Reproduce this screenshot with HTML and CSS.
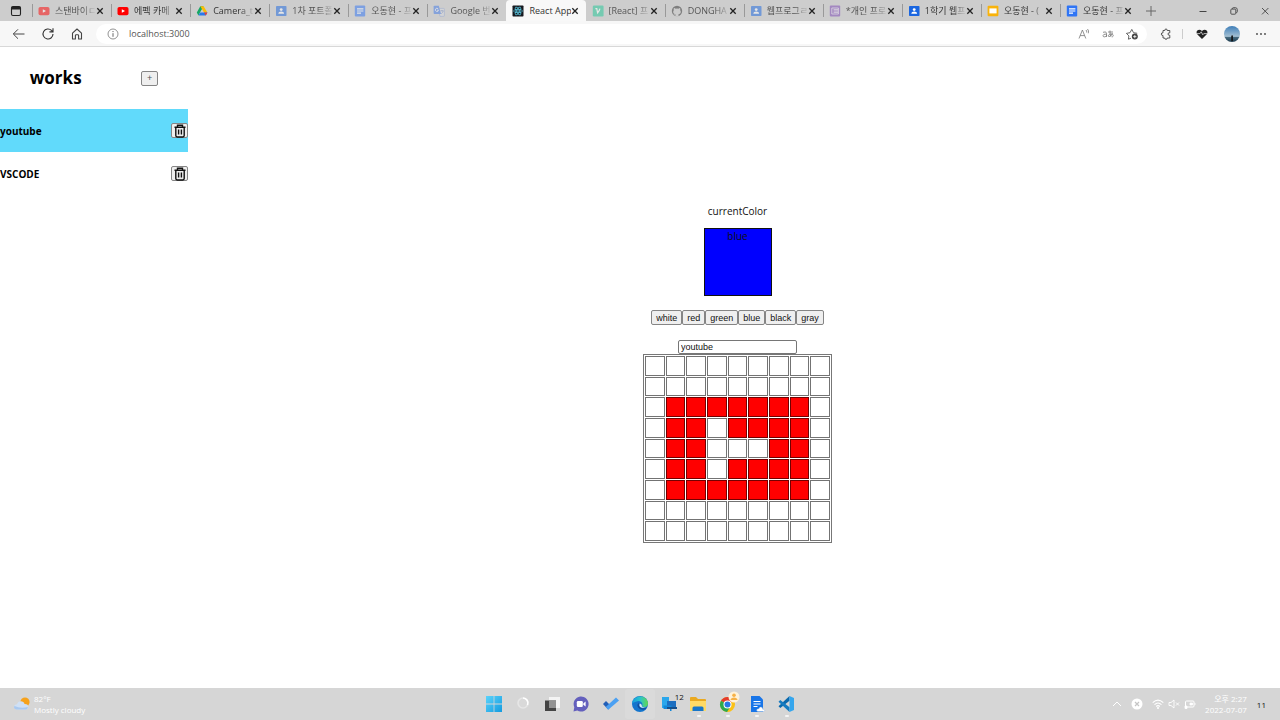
FILE: index.html
```
<!DOCTYPE html>
<html lang="ko">
<head>
<meta charset="utf-8">
<title>React App</title>
<link rel="stylesheet" href="styles.css">
</head>
<body>
<svg class="defs" aria-hidden="true">
  <symbol id="close" viewBox="0 0 8 8"><path d="M1.3 1.3l5.4 5.4M6.7 1.3L1.3 6.7" stroke="#222" stroke-width="1.3"/></symbol>
  <symbol id="yt" viewBox="0 0 12 12"><rect x=".5" y="2" width="11" height="8.2" rx="1.8" fill="#f00"/><path d="M4.8 4.2v3.6l3.2-1.8z" fill="#fff"/></symbol>
  <symbol id="class" viewBox="0 0 12 12"><rect x="1" y="1" width="10.5" height="10" rx=".8" fill="#1a66e0"/><circle cx="6.2" cy="4.6" r="1.4" fill="#fff"/><path d="M3.3 8.8c0-3 5.8-3 5.8 0z" fill="#fff"/></symbol>
  <symbol id="docs" viewBox="0 0 12 12"><rect x=".8" y=".6" width="10.4" height="10.8" rx="1" fill="#2f75f5"/><path d="M3 3.8h6.4M3 6h6.4M3 8.2h4" stroke="#fff" stroke-width="1.2"/></symbol>
  <symbol id="trash" viewBox="0 0 14 14"><path d="M1.5 3.2h11M4.5 3V1.2h5V3M2.8 3.4v8.2q0 1.4 1.4 1.4h5.6q1.4 0 1.4-1.4V3.4M5.6 5.6v5M8.4 5.6v5" fill="none" stroke="#111" stroke-width="1.4"/></symbol>
</svg>

<header class="browser">
  <div class="tabstrip">
    <button class="tab-menu" aria-label="Tab actions"><svg class="icon12" viewBox="0 0 12 12"><rect x="1.5" y="1.5" width="9" height="9" rx="1.4" fill="none" stroke="#222" stroke-width="1.1"/><path d="M1.5 3.2h9" stroke="#222" stroke-width="2.6"/></svg></button>
    <div class="tabs">
      <div class="tab dim"><svg class="icon12"><use href="#yt"/></svg><span class="tab-title">스탠바이ㄷ</span><button class="tab-close" aria-label="Close"><svg><use href="#close"/></svg></button></div>
      <div class="tab"><svg class="icon12"><use href="#yt"/></svg><span class="tab-title">에펙 카메</span><button class="tab-close" aria-label="Close"><svg><use href="#close"/></svg></button></div>
      <div class="tab"><svg class="icon12" viewBox="0 0 12 12"><path d="M4.3 1.2h3.3L4 7.5 2.4 10.6.8 7.5z" fill="#16a765"/><path d="M4.3 1.2h3.3l3.8 6.4H8z" fill="#fbbc05"/><path d="M.8 7.6l1.7 3h7.3l1.6-3H4.2l-1.7 3z" fill="#2879ee"/><path d="M8 7.6h3.4l-1.6 3z" fill="#ea4335"/></svg><span class="tab-title">Camera_t</span><button class="tab-close" aria-label="Close"><svg><use href="#close"/></svg></button></div>
      <div class="tab dim"><svg class="icon12"><use href="#class"/></svg><span class="tab-title">1차 포트폴</span><button class="tab-close" aria-label="Close"><svg><use href="#close"/></svg></button></div>
      <div class="tab dim"><svg class="icon12"><use href="#docs"/></svg><span class="tab-title">오동현 - 프</span><button class="tab-close" aria-label="Close"><svg><use href="#close"/></svg></button></div>
      <div class="tab dim"><svg class="icon12" viewBox="0 0 12 12"><path d="M5 3.4h5.6q.8 0 .8.8v6.4q0 .8-.8.8H7z" fill="#d8dbe2" stroke="#7893cc" stroke-width=".6"/><path d="M1.4.8h4.4L8 9H1.4Q.6 9 .6 8.200V1.600Q.6.8 1.400.8z" fill="#3f78e8"/><path d="M5.200 3.900a1.600 1.600 0 1 0 .3 1.300H4" fill="none" stroke="#fff" stroke-width=".8"/><path d="M7.400 5.800h3.200M9 5v.8M10.200 6q-.5 1.800-2 2.800" fill="none" stroke="#5574b4" stroke-width=".6"/></svg><span class="tab-title">Google 번</span><button class="tab-close" aria-label="Close"><svg><use href="#close"/></svg></button></div>
      <div class="tab active"><svg class="icon12" viewBox="0 0 12 12"><rect x=".5" y=".5" width="11" height="11" rx=".8" fill="#171a20"/><g fill="none" stroke="#5ccbe5" stroke-width=".7"><ellipse cx="6" cy="6" rx="4.500" ry="1.700"/><ellipse cx="6" cy="6" rx="4.500" ry="1.700" transform="rotate(60 6 6)"/><ellipse cx="6" cy="6" rx="4.500" ry="1.700" transform="rotate(120 6 6)"/></g><circle cx="6" cy="6" r=".8" fill="#5ccbe5"/></svg><span class="tab-title">React App</span><button class="tab-close" aria-label="Close"><svg><use href="#close"/></svg></button></div>
      <div class="tab dim"><svg class="icon12" viewBox="0 0 12 12"><rect x=".8" y=".6" width="10.800" height="10.800" rx="1.200" fill="#20c997"/><path d="M3.400 3.600h1.400l.8 4.200q2-2.300 2.300-4.200" fill="none" stroke="#fff" stroke-width="1.200"/></svg><span class="tab-title">[React] 프</span><button class="tab-close" aria-label="Close"><svg><use href="#close"/></svg></button></div>
      <div class="tab dim"><svg class="icon12" viewBox="0 0 12 12"><circle cx="6" cy="6" r="5.200" fill="#333"/><path d="M4.500 11.500V9.200C1.500 8.500 2 6 2.900 5.200 2.600 4.500 2.600 3.500 3 3q1 .1 1.700.7 1.300-.3 2.700 0Q8.100 3.100 9 3c.4.6.4 1.500.1 2.200C10 6 10.500 8.500 7.500 9.200v2.300z" fill="#ccc"/><path d="M4.600 10q-1.300.2-1.900-1" fill="none" stroke="#ccc" stroke-width=".7"/></svg><span class="tab-title">DONGHA</span><button class="tab-close" aria-label="Close"><svg><use href="#close"/></svg></button></div>
      <div class="tab dim"><svg class="icon12"><use href="#class"/></svg><span class="tab-title">웹프로그ㄹ</span><button class="tab-close" aria-label="Close"><svg><use href="#close"/></svg></button></div>
      <div class="tab dim"><svg class="icon12" viewBox="0 0 12 12"><rect x=".8" y=".6" width="10.400" height="10.800" rx=".8" fill="#7b45b5"/><path d="M2.800 3h6.600v6H2.800zM4.600 4.600h4.400M4.600 6h4.400M4.600 7.400h4.400" fill="none" stroke="#fff" stroke-width=".7"/></svg><span class="tab-title">*개인 프로</span><button class="tab-close" aria-label="Close"><svg><use href="#close"/></svg></button></div>
      <div class="tab"><svg class="icon12"><use href="#class"/></svg><span class="tab-title">1학기 웹프</span><button class="tab-close" aria-label="Close"><svg><use href="#close"/></svg></button></div>
      <div class="tab"><svg class="icon12" viewBox="0 0 12 12"><rect x=".6" y=".8" width="10.800" height="10.400" rx="1" fill="#f9b30b"/><path d="M2.400 3.400h7.200v5H2.400z" fill="#fff"/></svg><span class="tab-title">오동현 - (</span><button class="tab-close" aria-label="Close"><svg><use href="#close"/></svg></button></div>
      <div class="tab"><svg class="icon12"><use href="#docs"/></svg><span class="tab-title">오동현 - 프</span><button class="tab-close" aria-label="Close"><svg><use href="#close"/></svg></button></div>
    </div>
    <button class="new-tab" aria-label="New tab"><svg class="icon12" viewBox="0 0 12 12"><path d="M6 1v10M1 6h10" stroke="#666"/></svg></button>
    <div class="window-buttons">
      <button aria-label="Minimize"><svg class="icon10" viewBox="0 0 10 10"><path d="M1.500 5.500h7" stroke="#444"/></svg></button>
      <button aria-label="Restore"><svg class="icon10" viewBox="0 0 10 10"><path d="M3.400 3V2.600q0-.9.9-.9h2q2 0 2 2v2q0 .9-1 .9M1.800 4q0-.9.9-.9h3.200q.9 0 .9.900v3.300q0 .9-.9.9H2.700q-.9 0-.9-.9z" fill="none" stroke="#444" stroke-width=".9"/></svg></button>
      <button aria-label="Close window"><svg class="icon10" viewBox="0 0 10 10"><path d="M2 2l6.400 6.400M8.400 2L2 8.400" stroke="#444" stroke-width=".9"/></svg></button>
    </div>
  </div>

  <div class="toolbar">
    <div class="nav-buttons">
      <button aria-label="Back"><svg class="icon14" viewBox="0 0 14 14"><path d="M12.500 7h-11M6 2.300L1.300 7 6 11.700" fill="none" stroke="#444"/></svg></button>
      <button aria-label="Refresh"><svg class="icon14" viewBox="0 0 14 14"><path d="M12 7a5 5 0 1 1-1.500-3.600L12 4.800M12 1.300v3.600H8.400" fill="none" stroke="#333" stroke-width="1.100"/></svg></button>
      <button aria-label="Home"><svg class="icon14" viewBox="0 0 14 14"><path d="M2.500 6.200L7 2l4.500 4.200V12H8.600V8.600q0-.8-.8-.8H6.200q-.8 0-.8.8V12H2.500z" fill="none" stroke="#444" stroke-width="1.100" stroke-linejoin="round"/></svg></button>
    </div>
    <div class="address">
      <svg class="icon12" viewBox="0 0 12 12"><circle cx="6" cy="6" r="5" fill="none" stroke="#777" stroke-width=".8"/><path d="M6 5.200v3.600M6 3v1.100" stroke="#666"/></svg>
      <input class="url" type="text" value="localhost:3000" aria-label="Address">
      <button aria-label="Read aloud"><svg class="icon12" viewBox="0 0 12 12"><path d="M1 10.500L4.400 2l3.400 8.500M2.200 7.600h4.400M8 2q1 1 .6 2.500M9.500 1q1.700 1.700.8 4.300" fill="none" stroke="#777" stroke-width=".8"/></svg></button>
      <button aria-label="Translate"><svg class="icon12" viewBox="0 0 12 12"><path d="M1 4.300q3.500-1.300 3.500 1V9M4.500 6Q1 6 1 7.700c0 2 3.500 1.200 3.500-.5M6 4h5M8 2.500q-.4 4 1 6M10.500 5Q9 9 7 8.600C5 8 7.200 5.700 9.500 6c2.300.3 2.300 2.700.3 3" fill="none" stroke="#777" stroke-width=".8"/></svg></button>
      <button aria-label="Add to favorites"><svg class="icon12" viewBox="0 0 12 12"><path d="M5 10.200l-2.600 1 .5-3.300L.4 5.400 4 4.700 5.800 1.400l1.700 3.300 3.700.6" fill="none" stroke="#555" stroke-width=".9"/><circle cx="8.800" cy="8.600" r="3" fill="#444"/><path d="M8.800 7v3.200M7.200 8.600h3.200" stroke="#fff" stroke-width=".8"/></svg></button>
    </div>
    <div class="extras">
      <button aria-label="Extensions"><svg class="icon12" viewBox="0 0 12 12"><path d="M3 2.500h1.800q-.2-1.500 1.200-1.500t1.200 1.500h2.600v2.300q-1.800-.3-1.800 1.200t1.800 1.300V10H7.300q.1 1.300-1.300 1.300T4.700 10H3V7.500Q1.300 7.600 1.300 6.100T3 4.800z" fill="none" stroke="#444" stroke-width=".9"/></svg></button>
      <span class="divider"></span>
      <button aria-label="Browser essentials"><svg class="icon12" viewBox="0 0 12 12"><path d="M6 11L1.200 6.200C-1 3 3 0 6 3c3-3 7 0 4.800 3.200z" fill="#222"/><path d="M1 5.600h3l1.200-1.800 1.600 3 1-1.200H11" fill="none" stroke="#ddd" stroke-width=".8"/></svg></button>
      <button aria-label="Profile"><svg class="icon16" viewBox="0 0 16 16"><defs><linearGradient id="sky" x2="0" y2="1"><stop stop-color="#3e7eb8"/><stop offset=".65" stop-color="#a3bfd2"/><stop offset=".7" stop-color="#476b80"/><stop offset="1" stop-color="#203d50"/></linearGradient></defs><circle cx="8" cy="8" r="8" fill="url(#sky)"/><path d="M7.300 15V10l.8-1 .8 1v5z" fill="#111"/></svg></button>
      <button aria-label="Settings and more"><svg class="icon12" viewBox="0 0 12 12"><g fill="#444"><circle cx="2" cy="6" r=".9"/><circle cx="6" cy="6" r=".9"/><circle cx="10" cy="6" r=".9"/></g></svg></button>
    </div>
  </div>
</header>

<div class="app">
  <aside class="sidebar">
    <div class="sidebar-head"><h1>works</h1><button class="btn add" aria-label="Add work">+</button></div>
    <ul class="works">
      <li class="work selected"><h2>youtube</h2><button class="btn delete" aria-label="Delete youtube"><svg class="icon14"><use href="#trash"/></svg></button></li>
      <li class="work"><h2>VSCODE</h2><button class="btn delete" aria-label="Delete VSCODE"><svg class="icon14"><use href="#trash"/></svg></button></li>
    </ul>
  </aside>
  <main class="editor">
    <p class="label">currentColor</p>
    <div class="swatch">blue</div>
    <div class="palette">
      <button class="btn">white</button><button class="btn">red</button><button class="btn">green</button><button class="btn">blue</button><button class="btn">black</button><button class="btn">gray</button>
    </div>
    <input class="title-input" type="text" value="youtube" aria-label="Title">
    <table class="pixels">
      <tr><td></td><td></td><td></td><td></td><td></td><td></td><td></td><td></td><td></td></tr>
      <tr><td></td><td></td><td></td><td></td><td></td><td></td><td></td><td></td><td></td></tr>
      <tr><td></td><td class="red"></td><td class="red"></td><td class="red"></td><td class="red"></td><td class="red"></td><td class="red"></td><td class="red"></td><td></td></tr>
      <tr><td></td><td class="red"></td><td class="red"></td><td></td><td class="red"></td><td class="red"></td><td class="red"></td><td class="red"></td><td></td></tr>
      <tr><td></td><td class="red"></td><td class="red"></td><td></td><td></td><td></td><td class="red"></td><td class="red"></td><td></td></tr>
      <tr><td></td><td class="red"></td><td class="red"></td><td></td><td class="red"></td><td class="red"></td><td class="red"></td><td class="red"></td><td></td></tr>
      <tr><td></td><td class="red"></td><td class="red"></td><td class="red"></td><td class="red"></td><td class="red"></td><td class="red"></td><td class="red"></td><td></td></tr>
      <tr><td></td><td></td><td></td><td></td><td></td><td></td><td></td><td></td><td></td></tr>
      <tr><td></td><td></td><td></td><td></td><td></td><td></td><td></td><td></td><td></td></tr>
    </table>
  </main>
</div>

<footer class="taskbar">
  <div class="weather">
    <svg class="icon18" viewBox="0 0 18 18"><circle cx="12" cy="7" r="4.600" fill="#f6a21c"/><path d="M4.500 14.500C0 14.500 0 9.500 4 9.200 5 5 11 5.500 11.500 9c5-.3 5 5.500 1 5.500z" fill="#cfe0f5"/><path d="M4.500 14.500C1 14.500.5 12 1.500 11q6 3 13.500 1-.5 2.500-2.500 2.500z" fill="#a9c9f0"/></svg>
    <div><div>82°F</div><div>Mostly cloudy</div></div>
  </div>
  <div class="dock">
    <button aria-label="Start"><svg class="icon18" viewBox="0 0 18 18"><defs><linearGradient id="win" x2="1" y2="1"><stop stop-color="#5bd3fb"/><stop offset="1" stop-color="#139bdf"/></linearGradient></defs><path d="M1 1h7.600v7.600H1zM9.400 1H17v7.600H9.400zM1 9.400h7.600V17H1zM9.400 9.400H17V17H9.400z" fill="url(#win)"/></svg></button>
    <button aria-label="Search"><svg class="icon18" viewBox="0 0 18 18"><circle cx="9" cy="8" r="5" fill="#d9d9d9" stroke="#e6e6e6" stroke-width="1.600"/><path d="M9 3a5 5 0 0 1 4.500 7" fill="none" stroke="#fff" stroke-width="1.600"/></svg></button>
    <button aria-label="Task view"><svg class="icon18" viewBox="0 0 18 18"><path d="M6 2h11v11H6z" fill="#f4f4f4"/><path d="M2 5.500h11V16H2z" fill="#444"/><path d="M6 5.500h7V13H6z" fill="#929292"/></svg></button>
    <button aria-label="Chat"><svg class="icon18" viewBox="0 0 18 18"><path d="M1.500 16.500l.8-4.300a7.500 7.500 0 1 1 3 3.300z" fill="#6460bd"/><rect x="4.800" y="6" width="6" height="6" rx="1.200" fill="#fff"/><path d="M11.300 8.400l2.300-1.800v5l-2.300-1.800z" fill="#fff"/></svg></button>
    <button aria-label="To Do"><svg class="icon18" viewBox="0 0 18 18"><path d="M1 9l3-3 5 5-2.800 3.600z" fill="#235fb7"/><path d="M6.200 14.700L3.700 12 14 2.600l3 2.800z" fill="#4ba0f2"/></svg></button>
    <button class="current" aria-label="Edge"><svg class="icon18" viewBox="0 0 18 18"><defs><linearGradient id="edge" x2="1"><stop stop-color="#149be0"/><stop offset=".5" stop-color="#2bc4cb"/><stop offset="1" stop-color="#64d84c"/></linearGradient></defs><circle cx="9" cy="9" r="8" fill="#1475cd"/><path d="M1 8.500C2-.7 16.500-1 17 8.500c0 3.500-4 4.500-6 2.800 2-4-3-6.500-5.500-4.800Q2 7.300 1 8.500z" fill="url(#edge)"/><path d="M8 7.500c-1.300 5 4 7.500 8 4.700l-1 1.500C12 16 6 14 6.500 9.500z" fill="#124b9a"/><path d="M9 8.500c-2 3 1.500 5.500 6.800 3.500Q12 13 10.800 11.300 11.500 9.500 9 8.500z" fill="#dcebf2"/></svg></button>
    <button aria-label="Phone Link"><svg class="icon18" viewBox="0 0 18 18"><path d="M2 2h7v11H2z" fill="#2aa7ec"/><path d="M7 6h9v6H7z" fill="#1d6ec0"/><path d="M3.500 10.500h8V16H10v-2H3.500z" fill="#1186d8"/><path d="M7 12h10v2H7z" fill="#164f8c"/></svg><span class="count">12</span></button>
    <button class="running" aria-label="File Explorer"><svg class="icon18" viewBox="0 0 18 18"><path d="M1 3q0-1 1-1h5l2 2h7q1 0 1 1v11H1z" fill="#eaa920"/><path d="M1 6h16v10H1z" fill="#ffda66"/><path d="M3.500 16v-3q0-1.500 1.500-1.500h8q1.500 0 1.500 1.500v3z" fill="#1876c9"/></svg></button>
    <button class="running" aria-label="Chrome"><svg class="icon18" viewBox="0 0 18 18"><circle cx="8.500" cy="9.500" r="7.500" fill="#fbc116"/><path d="M8.500 9.500L2 5.700a7.500 7.500 0 0 1 13-.1z" fill="#e33b2e"/><path d="M8.500 9.500L2 5.700A7.500 7.500 0 0 0 8 17l3.400-5.600z" fill="#2da94f"/><circle cx="8.500" cy="9.500" r="4" fill="#fff"/><circle cx="8.500" cy="9.500" r="3" fill="#2878e6"/></svg><svg class="badge icon12" viewBox="0 0 12 12"><circle cx="6" cy="6" r="5.500" fill="#fff2d9"/><circle cx="6" cy="4.300" r="1.800" fill="#f7b247"/><path d="M2.500 9c0-3.500 7-3.500 7 0z" fill="#f7b247"/></svg></button>
    <button class="running" aria-label="Docs"><svg class="icon18" viewBox="0 0 18 18"><path d="M3 1h8.500L15 4.500V17H3z" fill="#1875e8"/><path d="M5.500 6.500h7M5.500 9h7M5.500 11.500h4" stroke="#fff" stroke-width="1.200"/><path d="M10 16.500c-2.500-.5-1-3.500.8-2.700 1-3 4.200-1.500 4 .5 2.700 0 2.200 2.200.7 2.200z" fill="#fff" stroke="#7ba6d8" stroke-width=".4"/></svg></button>
    <button class="running" aria-label="VS Code"><svg class="icon18" viewBox="0 0 18 18"><path d="M12.500 1v4.800L3.300 13l-1.800-1.700z" fill="#0a69ad"/><path d="M12.500 17v-4.800L3.300 5 1.500 6.700z" fill="#167bc0"/><path d="M12.500 17L17 15V3l-4.500-2z" fill="#35a6ed"/></svg></button>
  </div>
  <div class="tray">
    <svg class="icon10" viewBox="0 0 10 10"><path d="M1 7l4-4 4 4" fill="none" stroke="#fff"/></svg>
    <svg class="icon12" viewBox="0 0 12 12"><circle cx="6" cy="6" r="5.500" fill="#fff"/><path d="M4 4l4 4M8 4L4 8" stroke="#c5c5c5" stroke-width="1.200"/></svg>
    <div class="status">
      <svg class="icon12" viewBox="0 0 12 12"><path d="M.7 4.700q5.300-5 10.600 0M2.500 6.700q3.500-3.400 7 0M4.200 8.500q1.800-1.800 3.600 0" fill="none" stroke="#fff" stroke-width="1.100"/><circle cx="6" cy="10" r="1" fill="#fff"/></svg>
      <svg class="icon12" viewBox="0 0 12 12"><path d="M1 4.500h2L6 2v8L3 7.500H1zM8 4.500l3 3M11 4.500l-3 3" fill="none" stroke="#fff" stroke-width=".9"/></svg>
      <svg class="icon12" viewBox="0 0 12 12"><rect x="1.500" y="3" width="8.500" height="6" rx="1" fill="none" stroke="#fff"/><path d="M6 5h2.500v2H6zM11 5v2M1 8h2v2.500H1z" fill="#fff" stroke="#fff" stroke-width=".8"/></svg>
    </div>
    <div class="clock"><div>오후 2:27</div><div>2022-07-07</div></div>
    <span class="notices">11</span>
  </div>
</footer>
</body>
</html>
```

FILE: styles.css
```
* { box-sizing: border-box; }
body {
  margin: 0;
  min-height: 100vh;
  display: flex;
  flex-direction: column;
  background: #fff;
  color: #111;
  font-family: "Open Sans", "Noto Sans CJK KR", sans-serif;
  font-size: 9px;
}
button, input { font: inherit; color: inherit; }
button { padding: 0; border: 0; background: none; display: flex; align-items: center; justify-content: center; }
svg { display: block; flex: none; }
.defs { position: absolute; width: 0; height: 0; }
.icon10 { width: 10px; height: 10px; }
.icon12 { width: 12px; height: 12px; }
.icon14 { width: 14px; height: 14px; }
.icon16 { width: 16px; height: 16px; }
.icon18 { width: 18px; height: 18px; }

/* Browser chrome */
.browser { background: #f7f7f7; border-bottom: 1px solid #d8d8d8; }
.tabstrip { display: flex; height: 21px; background: #cdcdcd; }
.tab-menu { width: 32px; }
.tabs { display: flex; flex: 0 1 1107px; min-width: 0; }
.tab {
  flex: 1 1 0;
  min-width: 0;
  display: flex;
  align-items: center;
  padding: 0 7px 0 6px;
  color: #333;
  background: linear-gradient(#999, #999) left center / 1px 13px no-repeat;
}
.tab.dim > .icon12 { opacity: .5; }
.tab.dim .tab-title { color: #555; }
.tab.active { background: #f8f8f8; border-radius: 4px 4px 0 0; }
.tab.active + .tab { background: none; }
.tab-title {
  flex: 1;
  min-width: 0;
  padding-left: 5px;
  overflow: hidden;
  white-space: nowrap;
  line-height: 14px;
  mask-image: linear-gradient(to right, #000 70%, rgba(0, 0, 0, .1));
}
.tab.active .tab-title { mask-image: none; }
.tab-close svg { width: 8px; height: 8px; }
.new-tab { width: 24px; }
.window-buttons { display: flex; margin-left: auto; }
.window-buttons button { width: 31px; }

.toolbar { display: flex; align-items: center; height: 25px; }
.nav-buttons { display: flex; gap: 15px; padding: 0 12px; }
.address {
  flex: 1;
  display: flex;
  align-items: center;
  gap: 12px;
  height: 20px;
  padding: 0 9px 0 11px;
  border-radius: 10px;
  background: #fff;
}
.url { flex: 1; min-width: 0; padding: 0; margin-left: -2px; border: 0; outline: 0; background: none; color: #555; }
.extras { display: flex; align-items: center; padding: 0 13px; }
.divider { width: 1px; height: 10px; margin: 0 11px 0 10px; background: #ccc; }
.extras button + button { margin-left: 15px; }
.extras .divider + button { margin: 0 0 0 1px; padding: 0 1px; }

/* App */
.app { flex: 1; display: grid; grid-template-columns: 188px 1fr; }
.btn {
  height: 15px;
  border: 1px solid #858585;
  border-radius: 2px;
  background: #efefef;
  font-family: "Liberation Sans", Arial, sans-serif;
}
.sidebar-head { display: flex; align-items: center; justify-content: space-around; height: 62px; }
h1 { margin: 0; color: #000; font-size: 17px; line-height: 24px; }
.add { width: 17px; color: #555; }
.works { margin: 0; padding: 0; list-style: none; }
.work { display: flex; align-items: center; justify-content: space-between; height: 43px; }
.work h2 { margin: 0; color: #000; font-size: 10px; line-height: 14px; }
.selected { background: #61dafb; }
.delete { width: 17px; }

.editor { display: flex; flex-direction: column; align-items: center; justify-content: center; padding: 11px 0 0 7px; }
.label { margin: 0 0 9px; font-size: 10px; line-height: 16px; }
.swatch {
  width: 68px;
  height: 68px;
  border: 1px solid #111;
  background: blue;
  text-align: center;
  font-size: 10px;
  line-height: 14px;
}
.palette { display: flex; margin: 14px 0 15px; }
.palette .btn { padding: 0 4px; }
.title-input {
  width: 119px;
  height: 14px;
  padding: 0 2px;
  border: 1px solid #767676;
  border-radius: 2px;
  font-family: "Liberation Sans", Arial, sans-serif;
}
.pixels { width: 189px; height: 189px; border: 1px solid #777; border-spacing: 1px; table-layout: fixed; }
.pixels td { padding: 0; border: 1px solid rgba(0, 0, 0, .55); }
.pixels .red { background: red; }

/* Taskbar */
.taskbar {
  display: grid;
  grid-template-columns: 1fr 322px 1fr;
  align-items: center;
  height: 32px;
  background: #d6d6d6;
}
.weather { display: flex; align-items: center; gap: 3px; padding-left: 13px; color: #fff; font-size: 8px; line-height: 11px; }
.dock { display: flex; }
.dock button { position: relative; flex: 1; height: 30px; }
.dock .current { background: #dadada; border-radius: 3px; }
.running::after { content: ""; position: absolute; left: 13px; bottom: 2px; width: 4px; height: 2px; border-radius: 1px; background: #f4f4f4; }
.count { position: absolute; right: 0; top: 3px; font-size: 8px; line-height: 10px; }
.badge { position: absolute; right: 2px; top: 2px; }
.tray { display: flex; align-items: center; justify-content: flex-end; gap: 9px; padding-right: 14px; color: #fff; }
.status { display: flex; gap: 4px; }
.clock { text-align: right; font-size: 8px; line-height: 11px; }
.notices { padding-left: 1px; color: #111; font-size: 8px; }
```
